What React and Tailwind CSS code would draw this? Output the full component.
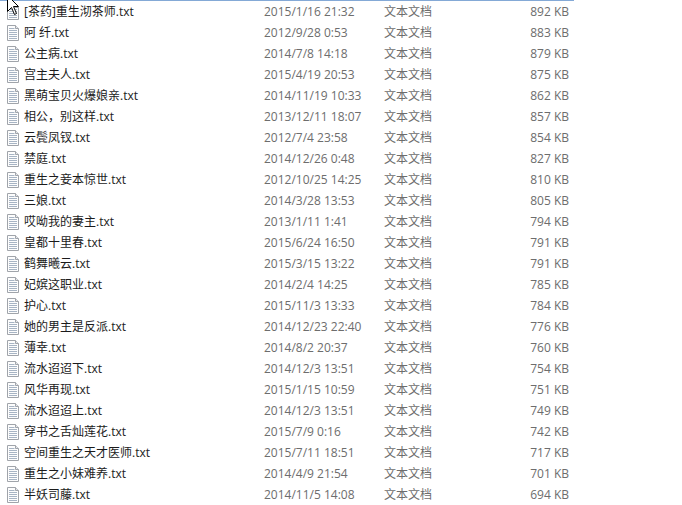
import React from "react";

const rows = [
  ["[茶药]重生沏茶师.txt", "2015/1/16 21:32", "892 KB"],
  ["阿 纤.txt", "2012/9/28 0:53", "883 KB"],
  ["公主病.txt", "2014/7/8 14:18", "879 KB"],
  ["宫主夫人.txt", "2015/4/19 20:53", "875 KB"],
  ["黑萌宝贝火爆娘亲.txt", "2014/11/19 10:33", "862 KB"],
  ["相公，别这样.txt", "2013/12/11 18:07", "857 KB"],
  ["云鬓凤钗.txt", "2012/7/4 23:58", "854 KB"],
  ["禁庭.txt", "2014/12/26 0:48", "827 KB"],
  ["重生之妾本惊世.txt", "2012/10/25 14:25", "810 KB"],
  ["三娘.txt", "2014/3/28 13:53", "805 KB"],
  ["哎呦我的妻主.txt", "2013/1/11 1:41", "794 KB"],
  ["皇都十里春.txt", "2015/6/24 16:50", "791 KB"],
  ["鹤舞曦云.txt", "2015/3/15 13:22", "791 KB"],
  ["妃嫔这职业.txt", "2014/2/4 14:25", "785 KB"],
  ["护心.txt", "2015/11/3 13:33", "784 KB"],
  ["她的男主是反派.txt", "2014/12/23 22:40", "776 KB"],
  ["薄幸.txt", "2014/8/2 20:37", "760 KB"],
  ["流水迢迢下.txt", "2014/12/3 13:51", "754 KB"],
  ["风华再现.txt", "2015/1/15 10:59", "751 KB"],
  ["流水迢迢上.txt", "2014/12/3 13:51", "749 KB"],
  ["穿书之舌灿莲花.txt", "2015/7/9 0:16", "742 KB"],
  ["空间重生之天才医师.txt", "2015/7/11 18:51", "717 KB"],
  ["重生之小妹难养.txt", "2014/4/9 21:54", "701 KB"],
  ["半妖司藤.txt", "2014/11/5 14:08", "694 KB"],
];

function TxtIcon() {
  return (
    <svg width="16" height="16" viewBox="0 0 16 16" className="shrink-0">
      <path d="M2.5 0.5 H10.5 L13.5 3.5 V15.5 H2.5 Z" fill="#fdfdfd" stroke="#a0a4aa" />
      <path d="M10.5 0.5 V3.5 H13.5" fill="#e6e8ec" stroke="#a0a4aa" />
      <g stroke="#a7b4c4" strokeWidth="1">
        <line x1="4" y1="3.5" x2="9.5" y2="3.5" />
        <line x1="4" y1="5.5" x2="12" y2="5.5" />
        <line x1="4" y1="7.5" x2="12" y2="7.5" />
        <line x1="4" y1="9.5" x2="12" y2="9.5" />
        <line x1="4" y1="11.5" x2="12" y2="11.5" />
        <line x1="4" y1="13.5" x2="12" y2="13.5" />
      </g>
    </svg>
  );
}

export default function App() {
  return (
    <div
      className="relative w-[682px] h-[505px] bg-white overflow-hidden text-[12px]"
      style={{ fontFamily: '"Open Sans", "Noto Sans CJK SC", sans-serif' }}
    >
      <div className="w-[574px] h-px bg-[#84a9d6]" />
      <div className="flex flex-col">
        {rows.map(([name, date, size], i) => (
          <div key={i} className="flex items-center h-[21px] leading-none">
            <div className="w-[264px] flex items-center pl-[5px] gap-[3px]">
              <TxtIcon />
              <span className="text-[#1b1b1b] whitespace-nowrap">{name}</span>
            </div>
            <div className="w-[120px] text-[#6d6d6d] whitespace-nowrap">{date}</div>
            <div className="w-[100px] text-[#6d6d6d] whitespace-nowrap">文本文档</div>
            <div className="w-[85px] text-right text-[#6d6d6d] whitespace-nowrap">{size}</div>
          </div>
        ))}
      </div>
      <svg
        className="absolute left-[7px] top-[-5px]"
        width="14"
        height="22"
        viewBox="0 0 14 22"
      >
        <path
          d="M0.5 0.5 V16.5 L4.5 12.5 L7.5 19.5 L9.5 18.5 L6.5 11.5 H11.5 Z"
          fill="#ffffff"
          stroke="#000000"
          strokeWidth="1"
          strokeLinejoin="miter"
        />
      </svg>
    </div>
  );
}
